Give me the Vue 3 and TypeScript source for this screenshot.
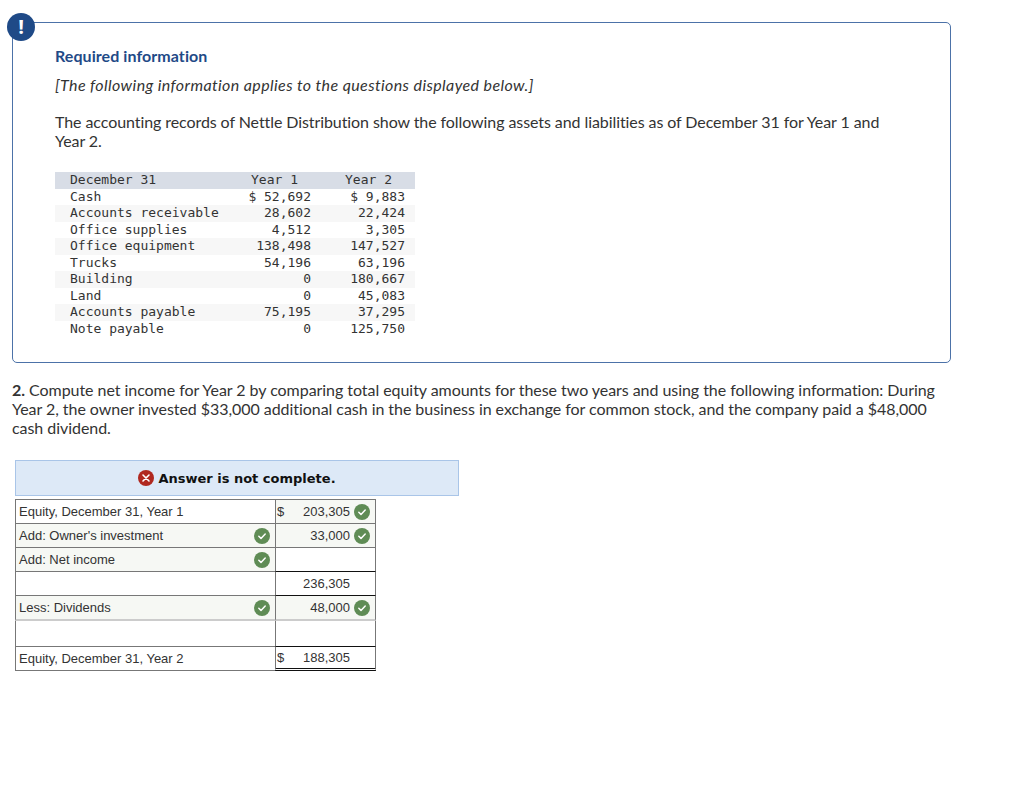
<script setup lang="ts">
const rows: [string, string, string][] = [
  ['December 31', 'Year 1', 'Year 2'],
  ['Cash', '$ 52,692', '$ 9,883'],
  ['Accounts receivable', '28,602', '22,424'],
  ['Office supplies', '4,512', '3,305'],
  ['Office equipment', '138,498', '147,527'],
  ['Trucks', '54,196', '63,196'],
  ['Building', '0', '180,667'],
  ['Land', '0', '45,083'],
  ['Accounts payable', '75,195', '37,295'],
  ['Note payable', '0', '125,750'],
]
interface AnswerRow {
  label: string
  labelCheck?: boolean
  dollar?: boolean
  value?: string
  valueCheck?: boolean
  tint?: boolean
  valueTint?: boolean
  cls?: string
}
const answers: AnswerRow[] = [
  { label: 'Equity, December 31, Year 1', dollar: true, value: '203,305', valueCheck: true, valueTint: true, cls: 'h25' },
  { label: "Add: Owner's investment", labelCheck: true, value: '33,000', valueCheck: true, tint: true, valueTint: true, cls: 'h24' },
  { label: 'Add: Net income', labelCheck: true, tint: true, cls: 'h24 blackbottom' },
  { label: '', value: '236,305', cls: 'h24 blackbottom' },
  { label: 'Less: Dividends', labelCheck: true, value: '48,000', valueCheck: true, tint: true, valueTint: true, cls: 'h25 lightbottom' },
  { label: '', cls: 'h26 blackbottom' },
  { label: 'Equity, December 31, Year 2', dollar: true, value: '188,305', cls: 'h24 last' },
]
</script>

<template>
  <main class="page">
    <section class="box">
      <div class="badge">!</div>
      <h2 class="title">Required information</h2>
      <p class="note">[The following information applies to the questions displayed below.]</p>
      <p class="intro">The accounting records of Nettle Distribution show the following assets and liabilities as of December 31 for Year 1 and Year 2.</p>
      <div class="records">
        <div v-for="(r, i) in rows" :key="r[0]" class="rec" :class="{ head: i === 0, alt: i > 0 && i % 2 === 0 }">
          <span class="name">{{ r[0] }}</span>
          <span class="num">{{ r[1] }}</span>
          <span class="num">{{ r[2] }}</span>
        </div>
      </div>
    </section>

    <p class="question"><b>2.</b> Compute net income for Year 2 by comparing total equity amounts for these two years and using the following information: During Year 2, the owner invested $33,000 additional cash in the business in exchange for common stock, and the company paid a $48,000 cash dividend.</p>

    <div class="banner">
      <svg class="x" width="16" height="16" viewBox="0 0 16 16">
        <circle cx="8" cy="8" r="8" fill="#b0281f" />
        <path d="M5 5l6 6M11 5l-6 6" stroke="#fff" stroke-width="1.6" stroke-linecap="round" />
      </svg>
      <span>Answer is not complete.</span>
    </div>

    <div class="answers">
      <div v-for="(a, i) in answers" :key="i" class="arow" :class="a.cls">
        <div class="lab" :class="{ tint: a.tint }">
          <span>{{ a.label }}</span>
          <svg v-if="a.labelCheck" class="chk" width="16" height="16" viewBox="0 0 16 16">
            <circle cx="8" cy="8" r="8" fill="#5f8c55" />
            <path d="M4.8 8.2l2.2 2.2 4.2-4.4" fill="none" stroke="#fff" stroke-width="1.5" stroke-linecap="round" stroke-linejoin="round" />
          </svg>
        </div>
        <div class="val" :class="{ tint: a.valueTint }">
          <span class="dollar">{{ a.dollar ? '$' : '' }}</span>
          <span class="amt">{{ a.value }}</span>
          <svg v-if="a.valueCheck" class="chk" width="16" height="16" viewBox="0 0 16 16">
            <circle cx="8" cy="8" r="8" fill="#5f8c55" />
            <path d="M4.8 8.2l2.2 2.2 4.2-4.4" fill="none" stroke="#fff" stroke-width="1.5" stroke-linecap="round" stroke-linejoin="round" />
          </svg>
        </div>
      </div>
    </div>
  </main>
</template>

<style>
html, body { margin: 0; background: #fff; }
</style>

<style scoped>
.page {
  width: 1024px;
  height: 796px;
  box-sizing: border-box;
  padding: 22px 0 0 12px;
  font-family: "Lato", "Open Sans", sans-serif;
  color: #333;
  overflow: hidden;
}
.box {
  position: relative;
  box-sizing: border-box;
  width: 939px;
  height: 341px;
  border: 1px solid #4c72a8;
  border-radius: 5px;
  padding: 23px 42px 0;
}
.badge {
  position: absolute;
  left: -6px;
  top: -10px;
  width: 28px;
  height: 28px;
  border-radius: 50%;
  background: #1f4a87;
  color: #fff;
  font: 700 20px/28px "Open Sans", sans-serif;
  text-align: center;
}
.title {
  margin: 0;
  font-size: 16px;
  letter-spacing: 0.07px;
  line-height: 20px;
  font-weight: 700;
  color: #1f4a87;
}
.note {
  margin: 9px 0 0;
  font-size: 16px;
  letter-spacing: 0.39px;
  line-height: 20px;
  font-style: italic;
}
.intro {
  margin: 17px 0 0;
  font-size: 16px;
  letter-spacing: -0.08px;
  line-height: 19px;
  width: 840px;
}
.records {
  margin-top: 22px;
  width: 360px;
  font: 13px/16.5px "DejaVu Sans Mono", monospace;
}
.rec {
  display: grid;
  grid-template-columns: 15px 164px 77px 94px 10px;
  white-space: pre;
  height: 16.5px;
}
.rec .name { grid-column: 2; }
.rec .num { text-align: right; }
.rec.head { background: #d8dde6; }
.rec.head .num { padding-right: 13px; }
.rec.alt { background: #f7f7f7; }
.question {
  margin: 17px 0 0;
  width: 940px;
  font-size: 16px;
  letter-spacing: -0.05px;
  line-height: 19px;
}
.banner {
  margin: 23px 0 0 3px;
  box-sizing: border-box;
  width: 444px;
  height: 36px;
  border: 1px solid #a9c5e8;
  background: #dde9f7;
  display: flex;
  align-items: center;
  justify-content: center;
  gap: 4px;
  font: 700 13px "DejaVu Sans", sans-serif;
  color: #111;
}
.answers {
  margin: 3px 0 0 3px;
  width: 361px;
  font: 13px "Liberation Sans", sans-serif;
  color: #333;
}
.arow {
  display: grid;
  grid-template-columns: 260px 101px;
}
.h24 { height: 24px; }
.h25 { height: 25px; }
.h26 { height: 26px; }
.lab, .val {
  display: flex;
  align-items: center;
  box-sizing: border-box;
  border-bottom: 1px solid #777;
}
.arow:first-child .lab, .arow:first-child .val { border-top: 1px solid #777; }
.lab {
  justify-content: space-between;
  padding: 0 5px 0 3px;
  border-left: 1px solid #777;
}
.val {
  border-left: 1px solid #777;
  border-right: 1px solid #777;
  padding: 0 5px 0 1px;
  gap: 4px;
}
.dollar { width: 8px; }
.amt { flex: 1; text-align: right; padding-right: 20px; }
.val .chk { margin-left: -20px; }
.tint { background: #f6f8f4; }
.blackbottom .val { border-bottom-color: #111; }
.lightbottom .lab, .lightbottom .val { border-bottom: 2px solid #ccc; }
.last .val { border-bottom: 3px double #111; }
</style>
